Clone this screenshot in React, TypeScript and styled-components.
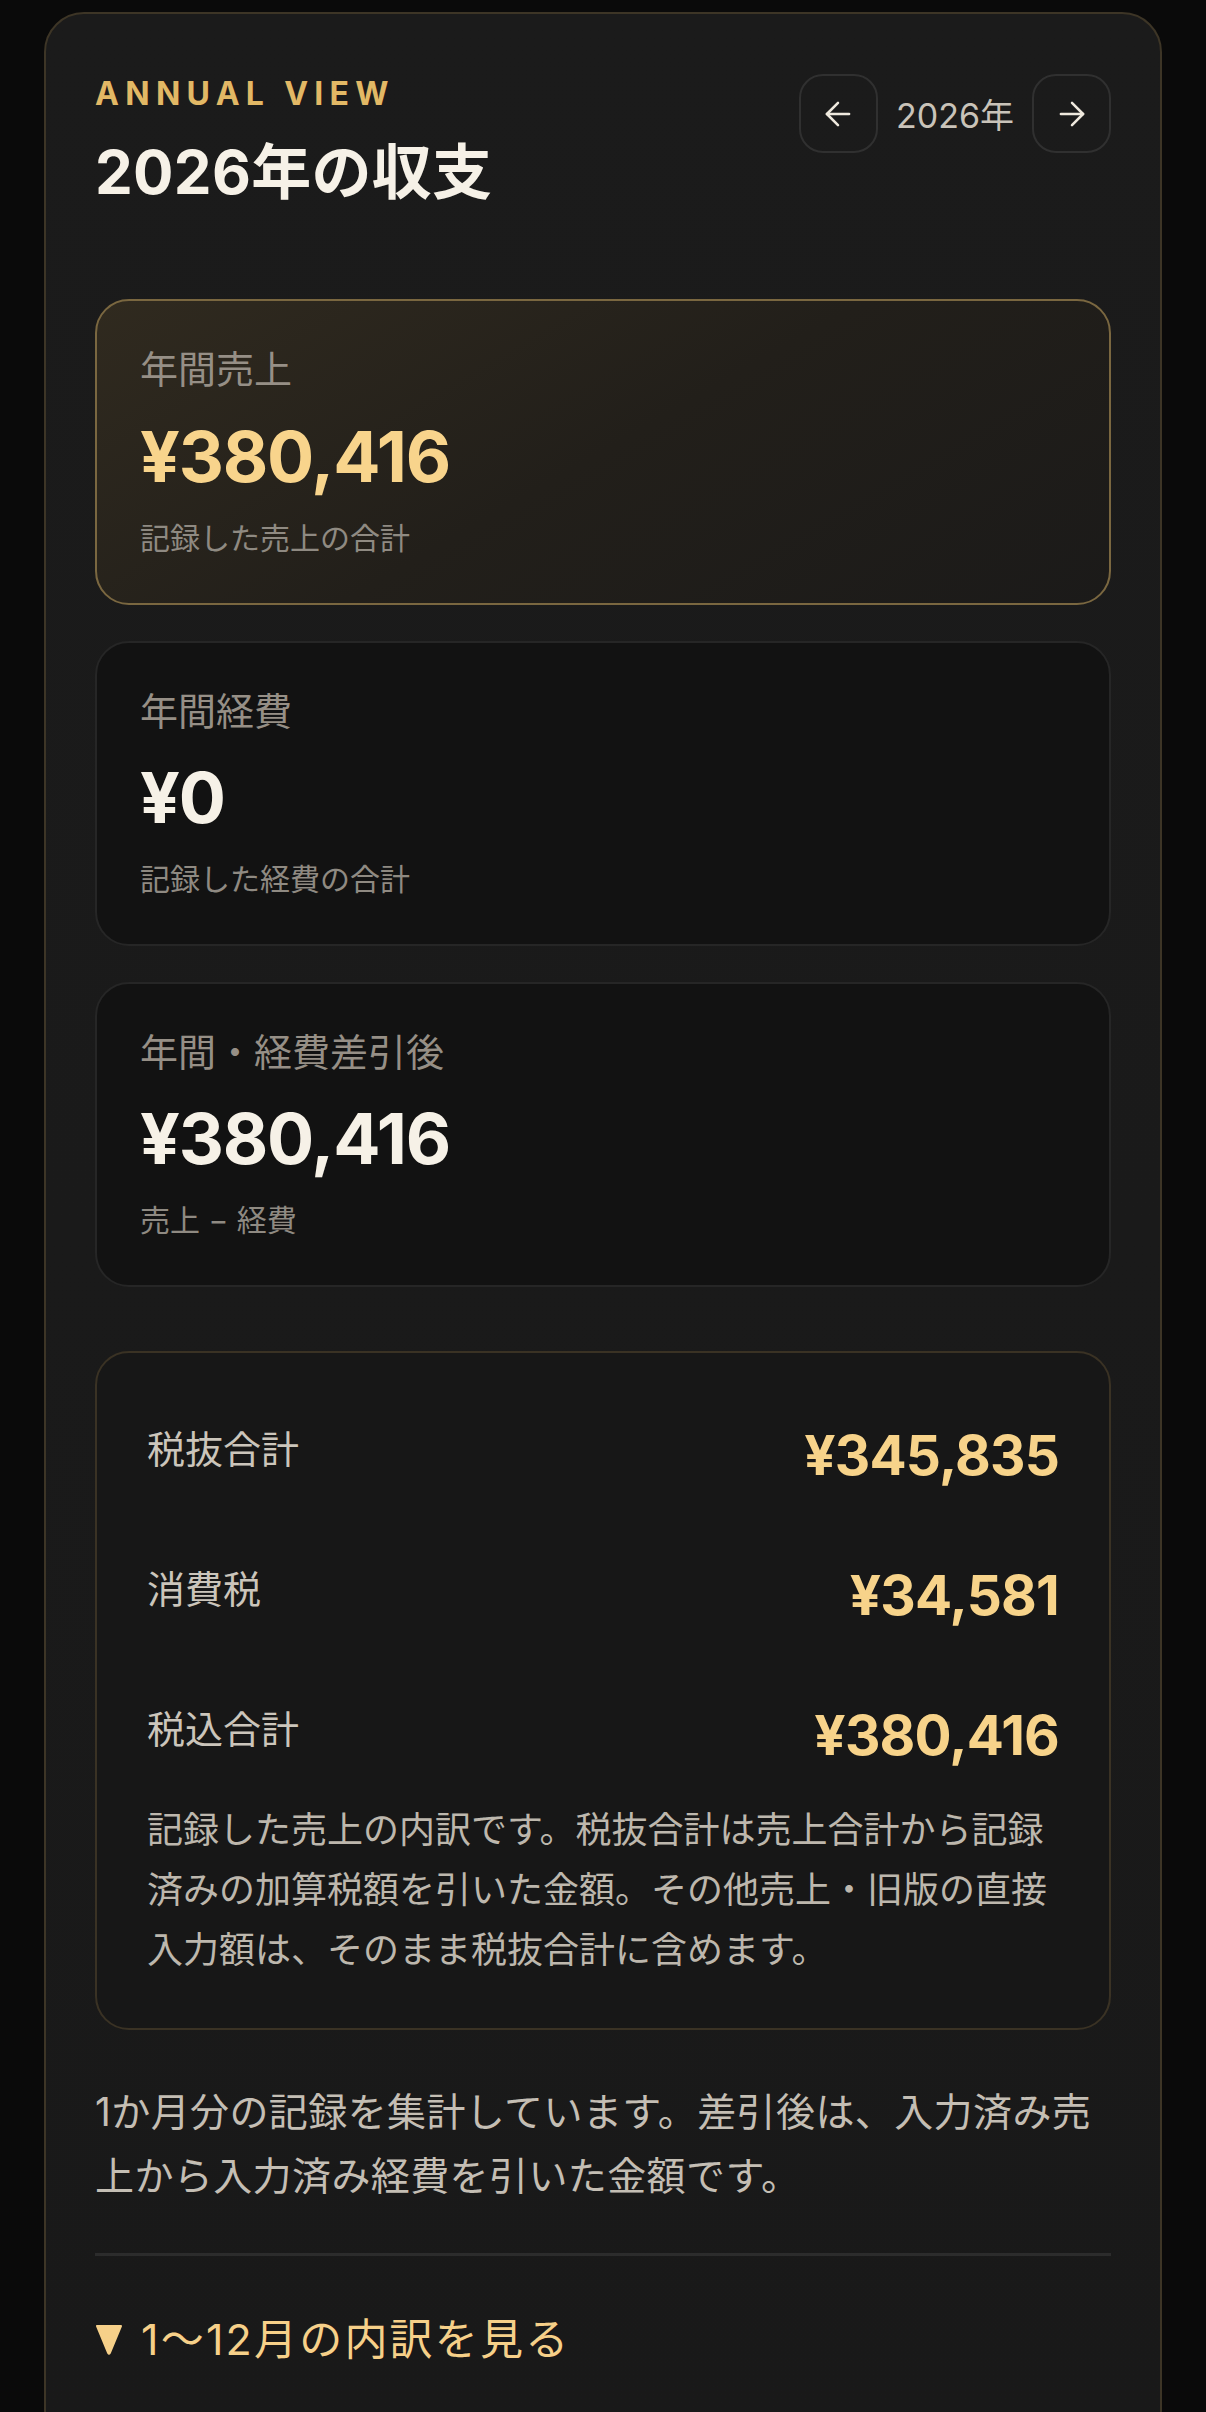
import React from 'react';
import styled, { createGlobalStyle } from 'styled-components';
import { ArrowLeft, ArrowRight } from 'lucide-react';

const GlobalStyle = createGlobalStyle`
  html, body {
    margin: 0;
    padding: 0;
    background: #0a0a0a;
  }
  body {
    font-family: Inter, "Noto Sans CJK JP", sans-serif;
    -webkit-font-smoothing: antialiased;
  }
  * {
    box-sizing: border-box;
  }
`;

const stats = [
  { label: '年間売上', value: '¥380,416', note: '記録した売上の合計', featured: true },
  { label: '年間経費', value: '¥0', note: '記録した経費の合計', featured: false },
  { label: '年間・経費差引後', value: '¥380,416', note: '売上 − 経費', featured: false },
];

const rows = [
  { label: '税抜合計', value: '¥345,835' },
  { label: '消費税', value: '¥34,581' },
  { label: '税込合計', value: '¥380,416' },
];

const App = () => {
  return (
    <Page>
      <GlobalStyle />
      <Panel>
        <Header>
          <TitleBlock>
            <Eyebrow>ANNUAL VIEW</Eyebrow>
            <Title>2026年の収支</Title>
          </TitleBlock>
          <YearNav>
            <NavButton aria-label="前の年">
              <ArrowLeft size={38} strokeWidth={1.6} />
            </NavButton>
            <YearLabel>2026年</YearLabel>
            <NavButton aria-label="次の年">
              <ArrowRight size={38} strokeWidth={1.6} />
            </NavButton>
          </YearNav>
        </Header>

        <StatList>
          {stats.map((s) => (
            <StatCard key={s.label} $featured={s.featured}>
              <StatLabel>{s.label}</StatLabel>
              <StatValue $featured={s.featured}>{s.value}</StatValue>
              <StatNote>{s.note}</StatNote>
            </StatCard>
          ))}
        </StatList>

        <Breakdown>
          <RowList>
            {rows.map((r) => (
              <Row key={r.label}>
                <RowLabel>{r.label}</RowLabel>
                <RowValue>{r.value}</RowValue>
              </Row>
            ))}
          </RowList>
          <BreakdownNote>
            記録した売上の内訳です。税抜合計は売上合計から記録済みの加算税額を引いた金額。その他売上・旧版の直接入力額は、そのまま税抜合計に含めます。
          </BreakdownNote>
        </Breakdown>

        <Summary>
          1か月分の記録を集計しています。差引後は、入力済み売上から入力済み経費を引いた金額です。
        </Summary>

        <Divider />

        <Toggle>
          <svg width="28" height="32" viewBox="0 0 28 32">
            <path d="M2 3 L26 3 L14.8 30 Q14 31.5 13.2 30 Z" fill="#f6d089" strokeLinejoin="round" stroke="#f6d089" strokeWidth="2" />
          </svg>
          <span>1〜12月の内訳を見る</span>
        </Toggle>
      </Panel>
    </Page>
  );
};

export default App;

const Page = styled.div`
  width: 100%;
  min-height: 2412px;
  padding: 12px 44px 0;
  background: #0a0a0a;
`;

const Panel = styled.section`
  border: 2px solid #3d3526;
  border-radius: 40px;
  background: linear-gradient(180deg, #1b1b1b 0%, #191919 100%);
  padding: 60px 49px 80px;
`;

const Header = styled.div`
  display: flex;
  justify-content: space-between;
  align-items: flex-start;
  margin-bottom: 88px;
`;

const TitleBlock = styled.div`
  display: flex;
  flex-direction: column;
  gap: 20px;
`;

const Eyebrow = styled.div`
  margin-top: 1px;
  font-size: 32px;
  line-height: 1.2;
  font-weight: 700;
  letter-spacing: 6.3px;
  color: #e2b865;
`;

const Title = styled.h1`
  margin: 0;
  font-size: 60px;
  line-height: 1.3;
  font-weight: 700;
  letter-spacing: 0.3px;
  color: #f6f1e7;
`;

const YearNav = styled.div`
  display: flex;
  align-items: center;
  gap: 18px;
`;

const NavButton = styled.button`
  width: 79px;
  height: 79px;
  border-radius: 24px;
  border: 2px solid #303030;
  background: transparent;
  color: #efe9de;
  display: flex;
  align-items: center;
  justify-content: center;
  padding: 0;
`;

const YearLabel = styled.span`
  font-size: 34px;
  color: #c9c3b9;
`;

const StatList = styled.div`
  display: flex;
  flex-direction: column;
  gap: 36px;
`;

const StatCard = styled.div<{ $featured: boolean }>`
  display: flex;
  flex-direction: column;
  gap: 20px;
  padding: 42px 43px 44px;
  border-radius: 34px;
  border: 2px solid ${(p) => (p.$featured ? '#7a6740' : '#262626')};
  background: ${(p) =>
    p.$featured
      ? 'linear-gradient(150deg, #302a1f 0%, #221f1a 50%, #1b1a19 100%)'
      : '#121212'};
`;

const StatLabel = styled.div`
  font-size: 38px;
  line-height: 1.4;
  color: #968f86;
`;

const StatValue = styled.div<{ $featured: boolean }>`
  font-size: 70px;
  line-height: 80px;
  font-weight: 700;
  letter-spacing: -1.2px;
  color: ${(p) => (p.$featured ? '#f8d48c' : '#f6f1e7')};
`;

const StatNote = styled.div`
  font-size: 30px;
  line-height: 1.4;
  color: #8f8a82;
`;

const Breakdown = styled.div`
  margin-top: 64px;
  padding: 70px 50px 48px;
  border-radius: 34px;
  border: 2px solid #3a3224;
  background: #171717;
`;

const RowList = styled.div`
  display: flex;
  flex-direction: column;
  gap: 76px;
`;

const Row = styled.div`
  display: flex;
  justify-content: space-between;
  align-items: flex-start;
`;

const RowLabel = styled.div`
  font-size: 38px;
  line-height: 1.4;
  color: #cbc5bb;
`;

const RowValue = styled.div`
  font-size: 55px;
  line-height: 64px;
  font-weight: 700;
  letter-spacing: -0.8px;
  color: #f7d38a;
`;

const BreakdownNote = styled.p`
  margin: 33px 0 0;
  font-size: 36px;
  line-height: 60px;
  color: #bdb7ad;
`;

const Summary = styled.p`
  margin: 50px 0 0;
  font-size: 39px;
  line-height: 64px;
  letter-spacing: 0.4px;
  color: #c4beb4;
`;

const Divider = styled.hr`
  margin: 45px 0 0;
  border: none;
  height: 3px;
  background: #2c2c2c;
`;

const Toggle = styled.div`
  margin-top: 53px;
  display: flex;
  align-items: center;
  gap: 18px;
  font-size: 43px;
  line-height: 1.4;
  letter-spacing: 2.2px;
  color: #f6d089;
`;
